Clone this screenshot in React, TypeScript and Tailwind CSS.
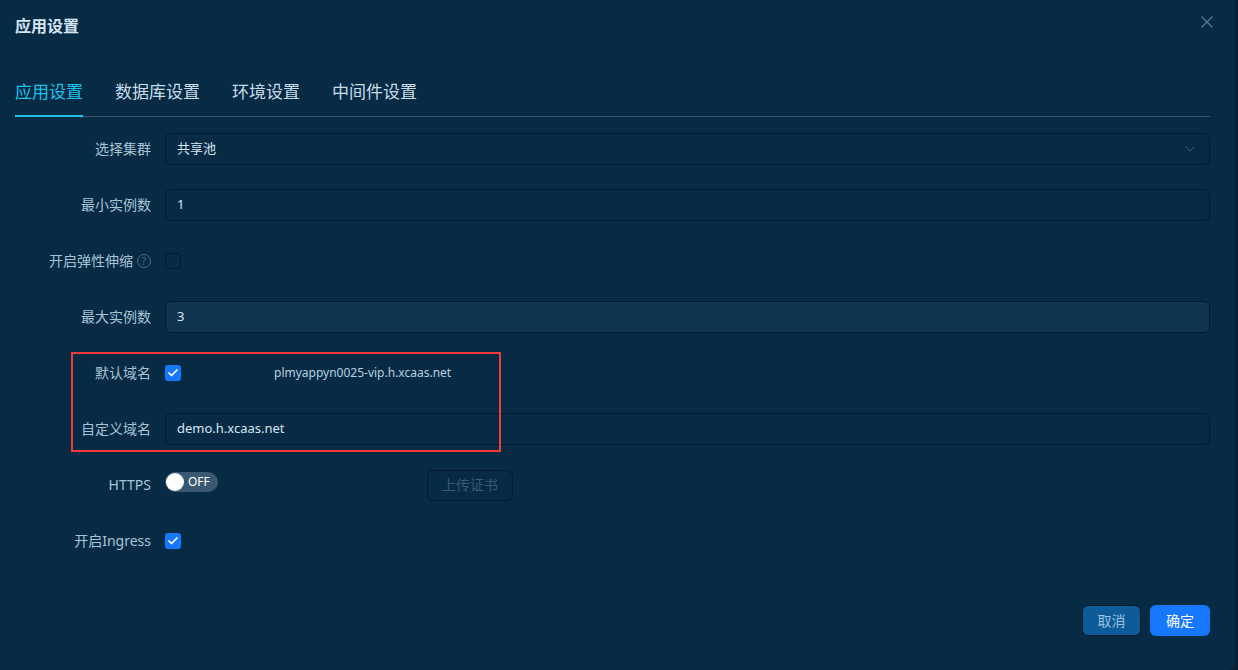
import { X, ChevronDown, Check } from "lucide-react";

const FONT = { fontFamily: '"Noto Sans", "Noto Sans CJK SC", sans-serif' };

const TABS = ["应用设置", "数据库设置", "环境设置", "中间件设置"];

function Row({ label, children, extra }: { label: string; children: React.ReactNode; extra?: React.ReactNode }) {
  return (
    <div className="flex h-8 items-center">
      <div className="flex w-[136px] flex-none items-center justify-end gap-1 text-sm text-[#a9c3d6]">
        {label}
        {extra}
      </div>
      <div className="ml-[14px] flex flex-1 items-center">{children}</div>
    </div>
  );
}

function Input({ value, light, select }: { value: string; light?: boolean; select?: boolean }) {
  return (
    <div
      className={`flex h-8 w-full items-center justify-between rounded-md border border-[#04192a] px-[11px] text-[13px] text-[#d5e6f2] ${
        light ? "bg-[#0f344f]" : "bg-[#072b45]"
      }`}
    >
      <span>{value}</span>
      {select && <ChevronDown size={16} strokeWidth={1.25} className="text-[#4d6d86]" />}
    </div>
  );
}

function Checkbox({ checked }: { checked?: boolean }) {
  return checked ? (
    <span className="flex h-4 w-4 items-center justify-center rounded-[3px] bg-[#1677ff]">
      <Check size={12} strokeWidth={3.5} className="text-white" />
    </span>
  ) : (
    <span className="h-4 w-4 rounded-[3px] border border-[#04192a] bg-[#072b45]" />
  );
}

export default function App() {
  return (
    <div className="flex h-[670px] w-[1238px] bg-[#0c1d2e]" style={FONT}>
      <div className="relative flex w-[1235px] flex-col rounded-br-md bg-[#072b45] px-[15px]">
        <div className="flex h-[52px] items-center justify-between">
          <h1 className="text-base font-bold text-[#d3e5f1]">应用设置</h1>
          <X size={20} strokeWidth={1.5} className="mr-[3px] -mt-[8px] text-[#5c7b92]" />
        </div>

        <div className="mr-[10px] mt-[28px] flex gap-8 border-b border-[#3a5770]">
          {TABS.map((t, i) => (
            <div
              key={t}
              className={`-mb-px pb-[11px] text-[17px] leading-[24px] ${
                i === 0 ? "border-b-2 border-[#1cc3ea] text-[#1cc3ea]" : "border-b-2 border-transparent text-[#c8dcea]"
              }`}
            >
              {t}
            </div>
          ))}
        </div>

        <div className="mr-[10px] mt-[16px] flex flex-col gap-6">
          <Row label="选择集群">
            <Input value="共享池" select />
          </Row>
          <Row label="最小实例数">
            <Input value="1" />
          </Row>
          <Row
            label="开启弹性伸缩"
            extra={
              <span className="flex h-[14px] w-[14px] items-center justify-center rounded-full border border-[#4b6a82] text-[10px] leading-none text-[#4b6a82]">
                ?
              </span>
            }
          >
            <Checkbox />
          </Row>
          <Row label="最大实例数">
            <Input value="3" light />
          </Row>
          <Row label="默认域名">
            <Checkbox checked />
            <span className="ml-[93px] text-[12px] text-[#b8cfe0]">plmyappyn0025-vip.h.xcaas.net</span>
          </Row>
          <Row label="自定义域名">
            <Input value="demo.h.xcaas.net" />
          </Row>
          <Row label="HTTPS">
            <div className="flex w-[262px] items-start self-stretch pt-[2px]">
              <div className="flex h-5 w-[53px] items-center rounded-full bg-[#3a5872] pl-[1px]">
                <span className="h-[18px] w-[18px] rounded-full bg-white" />
                <span className="ml-[4px] text-xs text-white">OFF</span>
              </div>
            </div>
            <button className="h-[31px] w-[86px] rounded-md border border-[#04192a] text-sm text-[#3b5a72]">
              上传证书
            </button>
          </Row>
          <Row label="开启Ingress">
            <Checkbox checked />
          </Row>
        </div>

        <div className="mr-[10px] mt-auto mb-[34px] flex justify-end gap-[9px]">
          <button className="h-[31px] w-[59px] rounded-md border border-[#04192a] bg-[#0e5b9a] text-sm text-[#9cc2df]">
            取消
          </button>
          <button className="h-[31px] w-[60px] rounded-md bg-[#1677ff] text-sm text-white">确定</button>
        </div>

        <div className="pointer-events-none absolute left-[71px] top-[352px] h-[100px] w-[430px] border-2 border-[#f23b3b]" />
      </div>
    </div>
  );
}
